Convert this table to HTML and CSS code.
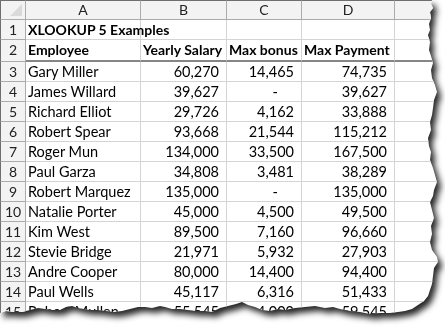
FILE: index.html
```html
<!DOCTYPE html>
<html>
<head>
<meta charset="utf-8">
<link rel="stylesheet" href="styles.css">
</head>
<body>
<div class="paper">
  <div class="sheet">
    <div class="row colhead">
      <div class="c rh corner"><svg width="14" height="14" viewBox="0 0 14 14"><polygon points="13,1 13,13 1,13" fill="#dadada"/></svg></div>
      <div class="c">A</div><div class="c">B</div><div class="c">C</div><div class="c">D</div><div class="c"></div>
    </div>
    <div class="row"><div class="c rh">1</div><div class="c txt b wide">XLOOKUP 5 Examples</div><div class="c"></div><div class="c"></div><div class="c"></div><div class="c"></div></div>
    <div class="row frozen"><div class="c rh">2</div><div class="c txt b">Employee</div><div class="c txt b">Yearly Salary</div><div class="c txt b">Max bonus</div><div class="c txt b">Max Payment</div><div class="c"></div></div>
    <div class="row"><div class="c rh">3</div><div class="c txt">Gary Miller</div><div class="c num">60,270</div><div class="c num">14,465</div><div class="c num">74,735</div><div class="c"></div></div>
    <div class="row"><div class="c rh">4</div><div class="c txt">James Willard</div><div class="c num">39,627</div><div class="c num dash">-</div><div class="c num">39,627</div><div class="c"></div></div>
    <div class="row"><div class="c rh">5</div><div class="c txt">Richard Elliot</div><div class="c num">29,726</div><div class="c num">4,162</div><div class="c num">33,888</div><div class="c"></div></div>
    <div class="row"><div class="c rh">6</div><div class="c txt">Robert Spear</div><div class="c num">93,668</div><div class="c num">21,544</div><div class="c num">115,212</div><div class="c"></div></div>
    <div class="row"><div class="c rh">7</div><div class="c txt">Roger Mun</div><div class="c num">134,000</div><div class="c num">33,500</div><div class="c num">167,500</div><div class="c"></div></div>
    <div class="row"><div class="c rh">8</div><div class="c txt">Paul Garza</div><div class="c num">34,808</div><div class="c num">3,481</div><div class="c num">38,289</div><div class="c"></div></div>
    <div class="row"><div class="c rh">9</div><div class="c txt">Robert Marquez</div><div class="c num">135,000</div><div class="c num dash">-</div><div class="c num">135,000</div><div class="c"></div></div>
    <div class="row"><div class="c rh">10</div><div class="c txt">Natalie Porter</div><div class="c num">45,000</div><div class="c num">4,500</div><div class="c num">49,500</div><div class="c"></div></div>
    <div class="row"><div class="c rh">11</div><div class="c txt">Kim West</div><div class="c num">89,500</div><div class="c num">7,160</div><div class="c num">96,660</div><div class="c"></div></div>
    <div class="row"><div class="c rh">12</div><div class="c txt">Stevie Bridge</div><div class="c num">21,971</div><div class="c num">5,932</div><div class="c num">27,903</div><div class="c"></div></div>
    <div class="row"><div class="c rh">13</div><div class="c txt">Andre Cooper</div><div class="c num">80,000</div><div class="c num">14,400</div><div class="c num">94,400</div><div class="c"></div></div>
    <div class="row"><div class="c rh">14</div><div class="c txt">Paul Wells</div><div class="c num">45,117</div><div class="c num">6,316</div><div class="c num">51,433</div><div class="c"></div></div>
    <div class="row"><div class="c rh">15</div><div class="c txt">Robert Mullen</div><div class="c num">55,545</div><div class="c num">4,000</div><div class="c num">59,545</div><div class="c"></div></div>
  </div>
</div>
</body>
</html>
```

FILE: styles.css
```css
* { box-sizing: border-box; }
html, body { margin: 0; padding: 0; background: #fff; }
body { width: 445px; height: 326px; overflow: hidden; }

.paper {
  width: 445px;
  height: 326px;
  filter: drop-shadow(4px 5px 3px rgba(0,0,0,0.85));
}

.sheet {
  width: 445px;
  height: 326px;
  background: #fff;
  overflow: hidden;
  font-family: Lato, "Liberation Sans", sans-serif;
  font-size: 14.5px;
  color: #000;
  clip-path: polygon(0 0, 432px 0, 431px 4px, 433px 8px, 430px 12px, 431px 18px, 429px 24px, 430px 30px, 428px 35px, 430px 42px, 429px 50px, 431px 56px, 433px 63px, 431px 70px, 432px 78px, 435px 85px, 437px 92px, 434px 100px, 433px 108px, 432px 115px, 430px 122px, 431px 130px, 428px 138px, 429px 146px, 431px 152px, 430px 160px, 433px 168px, 435px 175px, 437px 182px, 434px 190px, 433px 196px, 430px 202px, 432px 210px, 434px 218px, 431px 226px, 432px 234px, 430px 242px, 432px 250px, 437px 257px, 438px 262px, 434px 268px, 433px 276px, 432px 284px, 430px 290px, 428px 296px, 424px 301px, 418px 305px, 412px 309px, 405px 311px, 398px 312px, 390px 313px, 380px 313px, 370px 314px, 360px 312px, 350px 311px, 340px 309px, 333px 307px, 325px 308px, 315px 306px, 305px 307px, 295px 308px, 285px 310px, 278px 309px, 270px 311px, 262px 310px, 255px 307px, 248px 305px, 242px 302px, 236px 304px, 228px 306px, 220px 308px, 212px 312px, 205px 311px, 196px 311px, 188px 310px, 180px 309px, 172px 309px, 165px 307px, 160px 306px, 152px 308px, 145px 307px, 138px 307px, 130px 309px, 122px 311px, 114px 312px, 106px 311px, 98px 310px, 90px 310px, 84px 309px, 78px 308px, 72px 306px, 66px 307px, 60px 310px, 52px 310px, 45px 309px, 38px 308px, 30px 310px, 22px 312px, 14px 312px, 6px 311px, 0 313px);
}

.row {
  display: grid;
  grid-template-columns: 26px 115px 86px 75px 93px 60px;
  height: 20px;
}

.c {
  border-right: 1px solid #d4d4d4;
  border-bottom: 1px solid #d4d4d4;
  line-height: 19px;
  white-space: nowrap;
  overflow: visible;
}

.rh {
  border-left: 1px solid #6e6e6e;
  border-right: 1px solid #ababab;
  border-bottom: 1px solid #ababab;
  background: #f3f3f3;
  color: #222;
  text-align: center;
  font-size: 14px;
}

.colhead { height: 20px; }
.colhead .c {
  border-top: 1px solid #6e6e6e;
  background: #f3f3f3;
  border-right: 1px solid #ababab;
  border-bottom: 1px solid #ababab;
  text-align: center;
  color: #222;
  font-size: 14px;
  line-height: 18px;
}
.corner { display: flex; align-items: flex-end; justify-content: flex-end; padding: 0 2px 2px 0; }

.frozen { height: 22px; }
.frozen .c { border-bottom: 2px solid #868686; line-height: 20px; }
.frozen .rh { border-bottom: 1px solid #ababab; }

.txt { padding-left: 2px; text-align: left; }
.b { font-weight: 700; font-size: 14px; }
.wide { overflow: visible; position: relative; z-index: 1; }
.num { text-align: right; padding-right: 7px; }
.num.dash { padding-right: 23px; }
```
